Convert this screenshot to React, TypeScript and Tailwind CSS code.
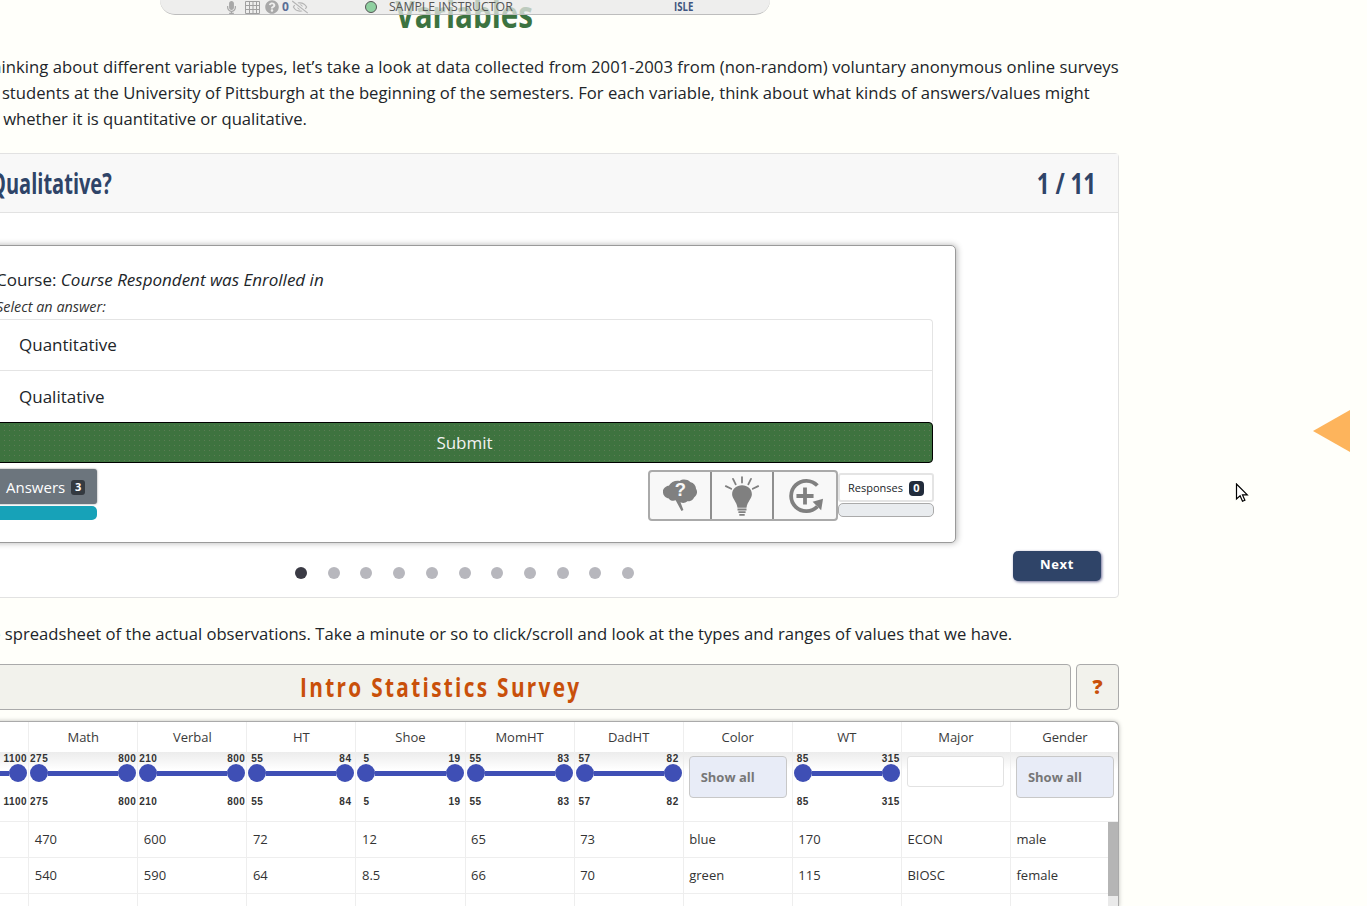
import { FaMicrophone, FaQuestionCircle, FaRegEyeSlash } from "react-icons/fa";

const columns = [
  { name: "Year", type: "slider", min: "1", max: "4" },
  { name: "SAT", type: "slider", min: "400", max: "1100" },
  { name: "Math", type: "slider", min: "275", max: "800" },
  { name: "Verbal", type: "slider", min: "210", max: "800" },
  { name: "HT", type: "slider", min: "55", max: "84" },
  { name: "Shoe", type: "slider", min: "5", max: "19" },
  { name: "MomHT", type: "slider", min: "55", max: "83" },
  { name: "DadHT", type: "slider", min: "57", max: "82" },
  { name: "Color", type: "select" },
  { name: "WT", type: "slider", min: "85", max: "315" },
  { name: "Major", type: "input" },
  { name: "Gender", type: "select" },
];

const rows = [
  ["2", "1070", "470", "600", "72", "12", "65", "73", "blue", "170", "ECON", "male"],
  ["3", "1130", "540", "590", "64", "8.5", "66", "70", "green", "115", "BIOSC", "female"],
  ["", "", "", "", "", "", "", "", "", "", "", ""],
];

function RangeLabels({ min, max }: { min?: string; max?: string }) {
  // four digit values sit flush with the cell edge instead of over the next column
  const maxClass = max && max.length > 3 ? "flex w-[18px] justify-end whitespace-nowrap" : "flex w-[18px] justify-center whitespace-nowrap";
  return (
    <div className="flex h-[12px] justify-between px-px font-['Liberation_Sans',sans-serif] text-[10px] leading-[12px] font-bold tracking-[0.5px] text-[#333]">
      <span className="flex w-[18px] justify-center whitespace-nowrap">{min}</span>
      <span className={maxClass}>{max}</span>
    </div>
  );
}

function RangeSlider({ min, max }: { min?: string; max?: string }) {
  return (
    <div className="pt-px">
      <RangeLabels min={min} max={max} />
      <div className="-mt-px flex items-center px-px">
        <div className="h-[18px] w-[18px] rounded-full bg-[#3f4fb5]" />
        <div className="h-[5px] flex-1 bg-[#3f4fb5]" />
        <div className="h-[18px] w-[18px] rounded-full bg-[#3f4fb5]" />
      </div>
      <div className="mt-[14px]">
        <RangeLabels min={min} max={max} />
      </div>
    </div>
  );
}

function FilterCell({ col }: { col: (typeof columns)[number] }) {
  if (col.type === "slider") return <RangeSlider min={col.min} max={col.max} />;
  if (col.type === "input") {
    return <div className="mx-[5px] mt-[4px] h-[31px] w-[97px] rounded-[3px] border border-[#e2e2e2] bg-white" />;
  }
  return (
    <div className="mx-[5px] mt-[4px] flex h-[42px] items-center rounded-[4px] border border-[#c8c8c8] bg-[#e8ecf7] pt-px pl-[11px] text-[13px] font-bold text-[#777]">
      Show all
    </div>
  );
}

function BrainIcon() {
  return (
    <svg viewBox="0 0 36 34" className="h-[33px] w-[35px]">
      <path
        fill="#808080"
        d="M6 7C8 3 13 1 17 2c3-2 8-2 11 1 4 1 6 4 6 7 2 3 1 7-2 9-1 3-4 4-7 4-2 2-5 2-7 1l3 8-2 1-6-11c-3 1-6 0-7-2-3 0-6-3-6-6-1-3 2-6 5-7z"
      />
      <text x="18" y="18" textAnchor="middle" fontSize="19" fontWeight="700" fill="#f8f8f8" fontFamily="Liberation Sans, sans-serif">
        ?
      </text>
    </svg>
  );
}

function BulbIcon() {
  return (
    <svg viewBox="0 0 40 44" className="h-[42px] w-[36px]">
      <g stroke="#808080" strokeWidth="2" strokeLinecap="round">
        <path d="M20 1v6M10 3l3 6M30 3l-3 6M2 11l6 3M38 11l-6 3" />
      </g>
      <path fill="#808080" d="M20 10c6 0 11 4 11 10 0 5-5 8-6 15h-10c-1-7-6-10-6-15 0-6 5-10 11-10z" />
      <path stroke="#808080" strokeWidth="2" d="M15 37h10M16 40h8M17 43h6" />
    </svg>
  );
}

function ReplayPlusIcon() {
  return (
    <svg viewBox="0 0 40 40" className="h-[38px] w-[38px]" fill="none">
      <path stroke="#808080" strokeWidth="4" d="M33 9A16 16 0 1 0 33 31" />
      <path stroke="#808080" strokeWidth="4" d="M20 11v18M11 20h18" />
      <path fill="#808080" d="M28 26l11-3-2 12z" />
    </svg>
  );
}

function TopBar() {
  return (
    <div className="absolute top-0 left-[160px] flex h-[15px] w-[610px] items-center rounded-b-[24px] border-b border-[#bdbdbd] bg-[#e8e8e8]/75 text-[#a8a8a8]">
      <FaMicrophone size={13} className="ml-[65px]" />
      <svg viewBox="0 0 15 13" className="ml-[7px] h-[13px] w-[15px]" fill="none" stroke="#a0a0a0" strokeWidth="1">
        <path d="M.5.5h14v12H.5zM.5 4.5h14M.5 8.5h14M4.5.5v12M8 .5v12M11.5.5v12" />
      </svg>
      <FaQuestionCircle size={14} className="ml-[5px]" />
      <span className="ml-[3px] text-[12px] font-bold text-[#5b6f96]">0</span>
      <FaRegEyeSlash size={16} className="ml-[3px] text-[#b4b4b4]" />
      <div className="ml-[57px] h-[12px] w-[12px] rounded-full border border-[#555] bg-[#8fd0a0]" />
      <span className="ml-[12px] text-[12.3px] text-[#555]">SAMPLE INSTRUCTOR</span>
      <span className="ml-[161px] origin-left scale-x-[0.8] text-[12px] font-bold text-[#3f5580]">ISLE</span>
    </div>
  );
}

function QuestionCard() {
  return (
    <div className="mx-auto h-[298px] w-[983px] rounded-[5px] border border-[#9a9a9a] bg-white px-[22px] pt-[21px] shadow-[1px_0_6px_rgba(0,0,0,0.3)]">
      <p className="text-[17px] leading-[26px] text-[#212529]">
        Course: <em>Course Respondent was Enrolled in</em>
      </p>
      <p className="mt-[3px] mb-px text-[14.4px] leading-[22px] text-[#333] italic">Select an answer:</p>
      <div className="rounded-t-[4px] border border-b-0 border-[#e4e4e4]">
        <div className="flex h-[51px] items-center border-b border-[#e4e4e4] pl-[22px] text-[17px] text-[#212529]">Quantitative</div>
        <div className="flex h-[51px] items-center pl-[22px] text-[17px] text-[#212529]">Qualitative</div>
      </div>
      <div className="flex h-[41px] items-center justify-center rounded-[4px] border border-black bg-[#3e733f] bg-[radial-gradient(#5c7c55_0.5px,transparent_1px)] bg-[length:5px_5px] text-[17px] text-[#f2f2f2]">
        Submit
      </div>
      <div className="mt-[6px] -mr-px flex items-start justify-between">
        <div className="w-[101px]">
          <div className="flex h-[35px] items-center rounded-[3px] bg-[#6c757d] pt-px pl-[10px] text-[15px] text-white shadow-[0_0_2px_rgba(0,0,0,0.5)]">
            Answers
            <span className="ml-[6px] flex h-[15px] w-[14px] items-center justify-center rounded-[3px] bg-[#343a40] text-[11px] font-bold">3</span>
          </div>
          <div className="mt-[2px] h-[14px] rounded-[5px] bg-[#17a2b8]" />
        </div>
        <div className="flex items-start">
          <div className="mt-px flex h-[51px] rounded-[4px] border-2 border-[#aaa] bg-[#f8f8f8]">
            <div className="flex w-[62px] items-center justify-center border-r-2 border-[#8f8f8f]"><BrainIcon /></div>
            <div className="flex w-[62px] items-center justify-center border-r-2 border-[#8f8f8f]"><BulbIcon /></div>
            <div className="flex w-[62px] items-center justify-center"><ReplayPlusIcon /></div>
          </div>
          <div className="mt-[4px] w-[96px]">
            <div className="flex h-[29px] items-center justify-center rounded-[3px] border-2 border-[#e4e4e4] bg-white pt-px text-[11px] text-[#212529]">
              Responses
              <span className="ml-[6px] flex h-[15px] w-[15px] items-center justify-center rounded-[4px] bg-[#212b3b] text-[11px] font-bold text-white">0</span>
            </div>
            <div className="mt-px h-[14px] rounded-[5px] border border-[#aaa] bg-[#e9ecef]" />
          </div>
        </div>
      </div>
    </div>
  );
}

function Panel() {
  const dots = Array.from({ length: 11 }, (_, i) => i);
  return (
    <div className="h-[445px] rounded-[4px] border border-[#e2e2e2] bg-white">
      <div className="flex h-[59px] items-center justify-between border-b border-[#e2e2e2] bg-[#f8f8f8] pr-[22px] pl-[179px] text-[#2f4468]">
        <span className="origin-left scale-x-[0.715] text-[28px] font-bold">Qualitative?</span>
        <span className="origin-right scale-x-[0.8] text-[28px] font-bold">1 / 11</span>
      </div>
      <div className="pt-[32px]">
        <QuestionCard />
        <div className="mt-[8px] grid grid-cols-[1fr_auto_1fr] items-start">
          <div />
          <div className="mt-[16px] flex gap-[20.7px]">
            {dots.map((i) => (
              <div key={i} className={i === 0 ? "h-[12px] w-[12px] rounded-full bg-[#3a3a44]" : "h-[12px] w-[12px] rounded-full bg-[#b7b7bd]"} />
            ))}
          </div>
          <div className="flex justify-end pr-[17px]">
            <div className="flex h-[30px] w-[88px] items-center justify-center rounded-[5px] bg-[#2f4468] pb-[2px] text-[13px] font-bold tracking-[0.6px] text-white shadow-[1px_1px_3px_rgba(50,50,110,0.7)]">
              Next
            </div>
          </div>
        </div>
      </div>
    </div>
  );
}

function DataTable() {
  return (
    <div className="relative mt-[11px] h-[186px] w-[1309px] overflow-hidden rounded-t-[6px] border-t border-r border-[#aaa] bg-white shadow-[0_0_4px_rgba(0,0,0,0.25)]">
      <div className="grid w-[1309px] grid-cols-12">
        {columns.map((col) => (
          <div key={col.name} className="flex h-[30px] items-center justify-center border-l border-[#eee] pt-px text-[13px] text-[#3a3a3a]">
            {col.name}
          </div>
        ))}
        {columns.map((col) => (
          <div key={col.name} className="h-[70px] border-b border-l border-[#eee] bg-[linear-gradient(#ececec,#fff_18px)]">
            <FilterCell col={col} />
          </div>
        ))}
        {rows.map((row, r) =>
          row.map((cell, c) => (
            <div key={`${r}-${c}`} className="flex h-[36px] items-center border-b border-l border-[#eee] pl-[5.6px] text-[13px] text-[#333]">
              {cell}
            </div>
          )),
        )}
      </div>
      <div className="absolute top-[100px] right-0 h-[86px] w-[10px] bg-[#eaeaea]">
        <div className="h-[74px] bg-[#b5b5b5]" />
      </div>
    </div>
  );
}

export default function App() {
  return (
    <div className="relative h-[906px] w-[1367px] overflow-hidden bg-[#fffffa] font-['Open_Sans',sans-serif] text-[#212529]">
      <div className="ml-[-190px] w-[1309px]">
        <h1 className="mt-[-13px] h-[67px] text-center text-[38px] leading-[52px] font-bold text-[#3c7340]">
          <span className="inline-block scale-x-[0.78]">Variables</span>
        </h1>
        <p className="ml-[172px] text-[16.65px] leading-[26px] whitespace-nowrap">
          <span className="tracking-[0.05px]">
            Thinking about different variable types, let’s take a look at data collected from 2001-2003 from (non-random) voluntary anonymous online surveys
          </span>
          <br />
          of students at the University of Pittsburgh at the beginning of the semesters. For each variable, think about what kinds of answers/values might
          <br />
          or whether it is quantitative or qualitative.
        </p>
        <div className="mt-[21px]">
          <Panel />
        </div>
        <p className="mt-[23px] ml-[165px] text-[16.65px] leading-[26px] whitespace-nowrap">
          the spreadsheet of the actual observations. Take a minute or so to click/scroll and look at the types and ranges of values that we have.
        </p>
        <div className="mt-[17px] flex gap-[5px]">
          <div className="flex h-[46px] flex-1 items-center justify-center rounded-[4px] border border-[#aaa] bg-[#f2f2ec] text-[27px] font-bold tracking-[3px] text-[#c9500a]">
            <span className="inline-block scale-x-[0.77]">Intro Statistics Survey</span>
          </div>
          <div className="flex h-[46px] w-[43px] items-center justify-center rounded-[4px] border border-[#aaa] bg-[#f2f2ec] text-[20px] font-extrabold text-[#c9500a]">
            ?
          </div>
        </div>
        <DataTable />
      </div>

      <TopBar />

      <svg viewBox="0 0 37 42" className="absolute top-[410px] left-[1313px] h-[42px] w-[37px]">
        <path d="M0 21 37 0v42z" fill="#fdb45c" />
      </svg>
      <svg viewBox="0 0 14 20" className="absolute top-[483px] left-[1235px] h-[20px] w-[14px]">
        <path d="M1.5 1v15l3.6-3.2 2.4 5.5 2.4-1-2.4-5.4h4.8z" fill="#fff" stroke="#000" strokeWidth="1.2" />
      </svg>
    </div>
  );
}
